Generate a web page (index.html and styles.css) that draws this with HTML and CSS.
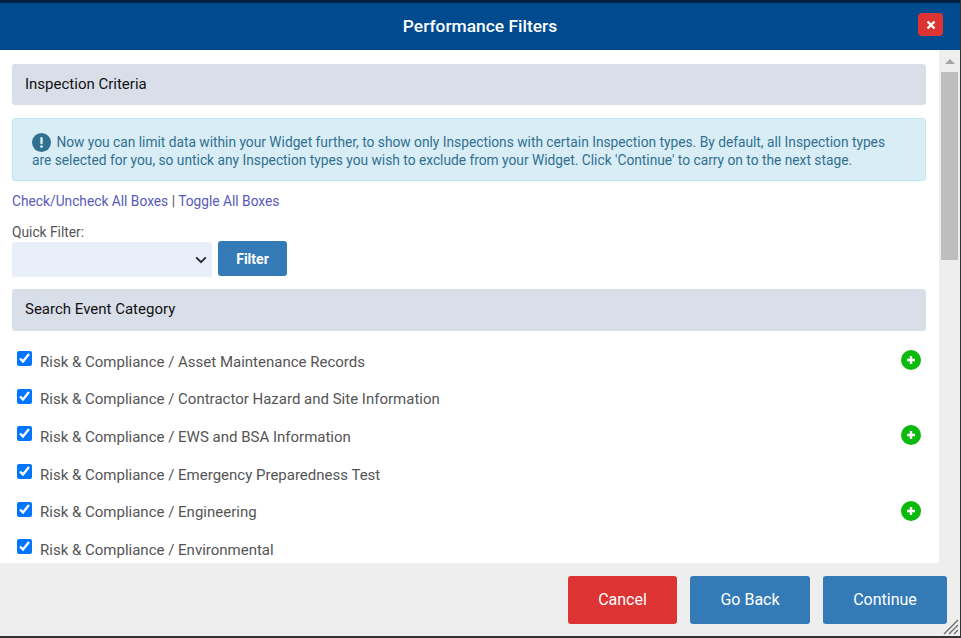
FILE: index.html
```html
<!DOCTYPE html>
<html lang="en">
  <head>
    <meta charset="UTF-8" />
    <title>Performance Filters</title>
    <link rel="stylesheet" href="styles.css">
  </head>
  <body>
    <div class="modal">
      <div class="modal__header">
        <h1 class="modal__title">Performance Filters</h1>
        <button class="modal__close" aria-label="Close">
          <svg width="10" height="10" viewBox="0 0 10 10"><path d="M1.5 1.5l7 7M8.5 1.5l-7 7" stroke="#fff" stroke-width="2.4" /></svg>
        </button>
      </div>
      <div class="modal__main">
        <div class="modal__body">
          <div class="section-head section-head--first">Inspection Criteria</div>
          <div class="alert">
            <svg class="alert__icon" width="19" height="19" viewBox="0 0 19 19"><circle cx="9.5" cy="9.5" r="9.5" fill="#31708f" /><rect x="8.3" y="4" width="2.4" height="7.2" rx="1" fill="#d9edf7" /><circle cx="9.5" cy="13.6" r="1.4" fill="#d9edf7" /></svg>
            Now you can limit data within your Widget further, to show only Inspections with certain Inspection types. By default, all Inspection types are selected for you, so untick any Inspection types you wish to exclude from your Widget. Click 'Continue' to carry on to the next stage.
          </div>
          <p class="links"><a href="#">Check/Uncheck All Boxes</a> | <a href="#">Toggle All Boxes</a></p>
          <label class="quick-label" for="quickFilter">Quick Filter:</label>
          <div class="quick-row">
            <div class="select-wrap">
              <select class="quick-select" id="quickFilter"><option></option></select>
              <svg class="select-wrap__arrow" width="12" height="8" viewBox="0 0 12 8"><path d="M1.2 1.4L6 6.2l4.8-4.8" fill="none" stroke="#2b2b3a" stroke-width="2" /></svg>
            </div>
            <button class="btn btn--filter">Filter</button>
          </div>
          <div class="section-head section-head--second">Search Event Category</div>
          <ul class="cat-list">
            <li class="cat-item"><input type="checkbox" checked /><span class="cat-item__text">Risk &amp; Compliance / Asset Maintenance Records</span><span class="plus"><svg width="20" height="20" viewBox="0 0 20 20"><circle cx="10" cy="10" r="10" fill="#0cb90c" /><path d="M10 6v8M6 10h8" stroke="#fff" stroke-width="2.4" /></svg></span></li>
            <li class="cat-item"><input type="checkbox" checked /><span class="cat-item__text">Risk &amp; Compliance / Contractor Hazard and Site Information</span></li>
            <li class="cat-item"><input type="checkbox" checked /><span class="cat-item__text">Risk &amp; Compliance / EWS and BSA Information</span><span class="plus"><svg width="20" height="20" viewBox="0 0 20 20"><circle cx="10" cy="10" r="10" fill="#0cb90c" /><path d="M10 6v8M6 10h8" stroke="#fff" stroke-width="2.4" /></svg></span></li>
            <li class="cat-item"><input type="checkbox" checked /><span class="cat-item__text">Risk &amp; Compliance / Emergency Preparedness Test</span></li>
            <li class="cat-item"><input type="checkbox" checked /><span class="cat-item__text">Risk &amp; Compliance / Engineering</span><span class="plus"><svg width="20" height="20" viewBox="0 0 20 20"><circle cx="10" cy="10" r="10" fill="#0cb90c" /><path d="M10 6v8M6 10h8" stroke="#fff" stroke-width="2.4" /></svg></span></li>
            <li class="cat-item"><input type="checkbox" checked /><span class="cat-item__text">Risk &amp; Compliance / Environmental</span></li>
          </ul>
        </div>
        <div class="scrollbar">
          <div class="scrollbar__up"></div>
          <div class="scrollbar__thumb"></div>
        </div>
      </div>
      <div class="modal__footer">
        <button class="btn btn--cancel">Cancel</button>
        <button class="btn btn--back">Go Back</button>
        <button class="btn btn--action">Continue</button>
        <svg class="resize-grip" width="16" height="16" viewBox="0 0 16 16"><path d="M1 15L15 1M6 15L15 6M11 15l4-4" stroke="#666" stroke-width="1.2" fill="none" /></svg>
      </div>
    </div>
  </body>
</html>
```

FILE: styles.css
```css
* {
  margin: 0;
  padding: 0;
  box-sizing: border-box;
}
html,
body {
  height: 100%;
  overflow: hidden;
}
body {
  font-family: Roboto, "Liberation Sans", sans-serif;
  font-size: 14px;
  color: #555;
  background: #333;
}
ul {
  list-style: none;
}

/* Modal */
.modal {
  height: 636px;
  width: 960px;
  display: flex;
  flex-direction: column;
  border-top: 3px solid #02203f;
  position: relative;
  background: #eee;
}
.modal__header {
  height: 47px;
  flex: none;
  background: #004a8f;
  display: flex;
  align-items: center;
  justify-content: center;
  padding-bottom: 2px;
  position: relative;
}
.modal__title {
  font-size: 17.4px;
  font-weight: 500;
  color: #fff;
}
.modal__close {
  position: absolute;
  top: 10px;
  right: 17px;
  width: 25px;
  height: 23px;
  background: #dc3333;
  border: none;
  border-radius: 4px;
  display: flex;
  align-items: center;
  justify-content: center;
}
.modal__main {
  height: 513px;
  flex: none;
  display: flex;
  background: #fff;
}
.modal__body {
  width: 939px;
  padding: 14px 13px 0 12px;
  overflow: hidden;
}
.modal__footer {
  flex: 1;
  display: flex;
  justify-content: flex-end;
  align-items: flex-start;
  gap: 13px;
  padding: 13px 13px 0 0;
  background: #eee;
  position: relative;
}

/* Section headers */
.section-head {
  background: #d9dfe9;
  border-radius: 3px;
  color: #111;
  font-size: 15px;
  font-weight: 450;
  padding: 0 0 2px 13px;
  display: flex;
  align-items: center;
}
.section-head--first {
  height: 41px;
}
.section-head--second {
  height: 42px;
  margin-top: 12px;
}

/* Alert */
.alert {
  margin-top: 13px;
  height: 63px;
  padding: 14px 19px 0;
  background: #d9edf7;
  border: 1px solid #bce8f1;
  border-radius: 3px;
  color: #31708f;
  font-size: 13.75px;
  line-height: 18px;
}
.alert__icon {
  vertical-align: -3px;
  margin: -4px 2px -2px 0;
}

/* Links and quick filter */
.links {
  margin-top: 12px;
  line-height: 16px;
  font-size: 13.75px;
}
.links a {
  color: #5a5ab8;
  text-decoration: none;
}
.quick-label {
  display: block;
  margin-top: 15px;
  line-height: 16px;
  font-size: 13.75px;
}
.quick-row {
  display: flex;
  align-items: flex-start;
  gap: 6px;
  margin-top: 1px;
}
.select-wrap {
  position: relative;
  margin-top: 1px;
}
.quick-select {
  display: block;
  appearance: none;
  width: 200px;
  height: 35px;
  border: none;
  border-radius: 2px;
  background: #e8eff8;
}
.select-wrap__arrow {
  position: absolute;
  top: 14px;
  right: 5px;
}
.btn {
  border: none;
  border-radius: 3px;
  color: #fff;
  font-family: inherit;
  font-size: 16px;
  padding-bottom: 2px;
  display: block;
}
.btn--filter {
  width: 69px;
  height: 35px;
  background: #337ab7;
  font-size: 14px;
  font-weight: 700;
  padding-bottom: 0;
}
.btn--action {
  width: 124px;
  height: 48px;
  background: #337ab7;
}
.btn--back {
  width: 120px;
  height: 48px;
  background: #337ab7;
}
.btn--cancel {
  width: 109px;
  height: 48px;
  background: #dc3333;
}

/* Category list */
.cat-list {
  margin-top: 12px;
}
.cat-item {
  height: 37.6px;
  display: flex;
  align-items: center;
  padding: 0 5px;
  font-size: 15px;
  color: #555;
}
.cat-item input {
  width: 15px;
  height: 15px;
  margin: -6px 8px 0 0;
  flex: none;
}
.cat-item__text {
  flex: 1;
}
.plus {
  display: flex;
  margin-top: -3px;
}

/* Scrollbar */
.scrollbar {
  width: 21px;
  flex: none;
  background: #eee;
  padding: 0 2px;
}
.scrollbar__up {
  height: 22px;
  position: relative;
}
.scrollbar__up::after {
  content: "";
  position: absolute;
  top: 9px;
  left: 4px;
  border-left: 5px solid transparent;
  border-right: 5px solid transparent;
  border-bottom: 5px solid #a3a3a3;
}
.scrollbar__thumb {
  height: 188px;
  background: #bebebe;
}
.resize-grip {
  position: absolute;
  right: 1px;
  bottom: 1px;
}
```
